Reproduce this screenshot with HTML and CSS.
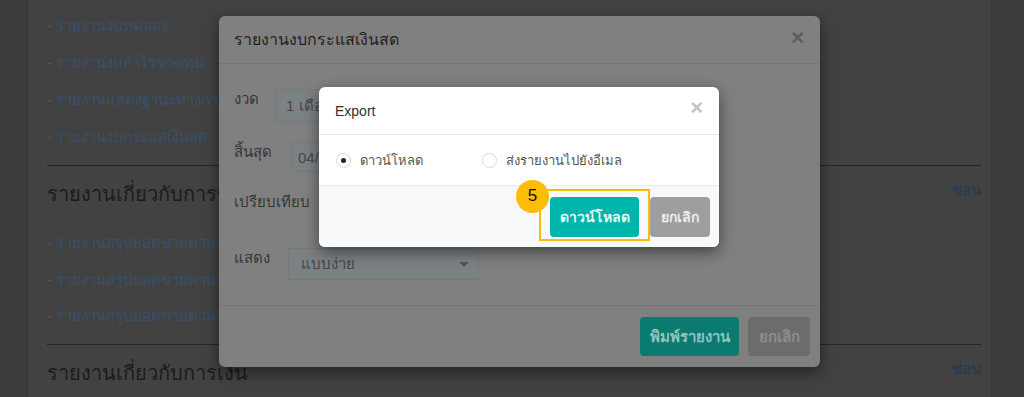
FILE: index.html
```html
<!DOCTYPE html>
<html lang="th">
<head>
<meta charset="utf-8">
<title>Export</title>
<link rel="stylesheet" href="styles.css">
</head>
<body>
<div class="page">
  <aside class="side side-left"></aside>
  <main class="content">
    <ul class="report-list">
      <li><span class="dash">-</span> <a class="report-link">รายงานงบทดลอง</a></li>
      <li><span class="dash">-</span> <a class="report-link">รายงานงบกำไรขาดทุน</a></li>
      <li><span class="dash">-</span> <a class="report-link">รายงานแสดงฐานะทางการเงิน</a></li>
      <li><span class="dash">-</span> <a class="report-link">รายงานงบกระแสเงินสด</a></li>
    </ul>
    <hr class="divider">
    <div class="section-head">
      <h2 class="section-title">รายงานเกี่ยวกับการขาย</h2>
      <a class="toggle">ซ่อน</a>
    </div>
    <ul class="report-list report-list-2">
      <li><span class="dash">-</span> <a class="report-link">รายงานสรุปยอดขายตามลูกค้า</a></li>
      <li><span class="dash">-</span> <a class="report-link">รายงานสรุปยอดขายตามบัญชี</a></li>
      <li><span class="dash">-</span> <a class="report-link">รายงานสรุปยอดขายตามลูกหนี้</a></li>
    </ul>
    <hr class="divider">
    <div class="section-head">
      <h2 class="section-title">รายงานเกี่ยวกับการเงิน</h2>
      <a class="toggle">ซ่อน</a>
    </div>
  </main>
  <aside class="side side-right"></aside>
</div>

<div class="modal modal-report">
  <div class="modal-header report-header">
    <h3 class="report-title">รายงานงบกระแสเงินสด</h3>
    <span class="close close-dim">&times;</span>
  </div>
  <div class="report-body">
    <div class="form-row row-period">
      <label class="form-label">งวด</label>
      <div class="control control-period">1 เดือน</div>
    </div>
    <div class="form-row row-end">
      <label class="form-label">สิ้นสุด</label>
      <div class="control control-end">04/2563</div>
    </div>
    <div class="form-row row-compare">
      <label class="form-label">เปรียบเทียบ</label>
    </div>
    <div class="form-row row-show">
      <label class="form-label">แสดง</label>
      <div class="control control-show">แบบง่าย<span class="caret"></span></div>
    </div>
  </div>
  <div class="report-footer">
    <button class="btn btn-print">พิมพ์รายงาน</button>
    <button class="btn btn-cancel-dim">ยกเลิก</button>
  </div>
</div>

<div class="modal modal-export">
  <div class="modal-header export-header">
    <h3 class="export-title">Export</h3>
    <span class="close close-light">&times;</span>
  </div>
  <div class="export-body">
    <label class="radio"><span class="radio-dot checked"></span>ดาวน์โหลด</label>
    <label class="radio radio-email"><span class="radio-dot"></span>ส่งรายงานไปยังอีเมล</label>
  </div>
  <div class="export-footer">
    <div class="highlight-wrap">
      <button class="btn btn-download">ดาวน์โหลด</button>
      <span class="highlight"></span>
      <span class="step-badge">5</span>
    </div>
    <button class="btn btn-cancel">ยกเลิก</button>
  </div>
</div>
</body>
</html>
```

FILE: styles.css
```css
* { box-sizing: border-box; }

html, body {
  margin: 0;
  padding: 0;
  width: 1024px;
  height: 397px;
  overflow: hidden;
}

body {
  background: #3d3d3d;
  font-family: "Liberation Sans", "Noto Sans", "DejaVu Sans", sans-serif;
  font-size: 14px;
  color: #333;
  position: relative;
}

.page {
  display: flex;
  height: 397px;
}

.side { background: #3d3d3d; }
.side-left { width: 28px; border-right: 1px solid #383838; }
.side-right { width: 33px; border-left: 1px solid #383838; }

.content {
  flex: 1;
  background: #424242;
  padding: 16px 10px 0 19px;
}

.report-list {
  list-style: none;
  margin: 0;
  padding: 0;
  display: flex;
  flex-direction: column;
  gap: 17px;
}
.report-list-2 { margin-top: 25px; gap: 16.5px; }

.report-list li {
  font-size: 15px;
  line-height: 20px;
  white-space: nowrap;
}

.dash { color: #555; }
.report-link { color: #38506b; }

.divider {
  border: 0;
  border-top: 1px solid #262626;
  margin: 18px 0 14px;
  height: 0;
}

.section-head {
  display: flex;
  justify-content: space-between;
  align-items: flex-start;
  height: 28px;
}
.section-title {
  margin: 0;
  font-size: 20px;
  line-height: 28px;
  font-weight: normal;
  color: #1c1c1c;
  white-space: nowrap;
}
.toggle {
  color: #2b3c4f;
  font-size: 15px;
  line-height: 20px;
  font-weight: bold;
}

/* Modals */
.modal {
  position: absolute;
  border-radius: 6px;
  overflow: hidden;
  box-shadow: 0 5px 15px rgba(0, 0, 0, 0.5);
  display: flex;
  flex-direction: column;
}

.modal-header {
  display: flex;
  align-items: center;
  justify-content: space-between;
}

.close {
  font-size: 22px;
  font-weight: bold;
  line-height: 20px;
}

/* Report modal (dimmed under backdrop) */
.modal-report {
  left: 219px;
  top: 16px;
  width: 601px;
  height: 351px;
  background: #808080;
}
.report-header {
  height: 48px;
  padding: 0 16px 0 15px;
  border-bottom: 1px solid #777;
}
.report-title {
  margin: 0;
  font-size: 16px;
  font-weight: normal;
  color: #1f1f1f;
}
.close-dim { color: #5e5e5e; margin-top: -4px; }

.report-body {
  flex: 1;
  padding: 25px 15px 0 15px;
  display: flex;
  flex-direction: column;
  gap: 20px;
}
.form-row {
  display: flex;
  align-items: flex-start;
  gap: 16px;
}
.row-end { gap: 19px; }
.row-show { gap: 18px; }
.form-label {
  line-height: 20px;
  font-size: 15px;
  color: #363636;
}
.control {
  background: #7c8184;
  border: 1px solid #75797c;
  border-radius: 3px;
  color: #474747;
  font-size: 15px;
  display: flex;
  align-items: center;
  position: relative;
}
.control-period { height: 33px; width: 180px; padding-left: 10px; }
.control-end { height: 30px; width: 150px; padding-left: 6px; }
.row-compare { height: 36px; }
.control-show { height: 32px; width: 191px; padding-left: 12px; }
.caret {
  position: absolute;
  right: 9px;
  top: 13px;
  width: 0;
  height: 0;
  border-left: 5px solid transparent;
  border-right: 5px solid transparent;
  border-top: 5px solid #555;
}

.report-footer {
  height: 62px;
  border-top: 1px solid #777;
  display: flex;
  justify-content: flex-end;
  align-items: center;
  gap: 9px;
  padding: 0 10px;
}

.btn {
  border: 0;
  border-radius: 4px;
  font-family: inherit;
  font-size: 15px;
  height: 39px;
  padding: 0;
  white-space: nowrap;
}
.btn-print { background: #0b7a6f; color: #8fc4bd; width: 99px; font-weight: bold; }
.btn-cancel-dim { background: #6c6c6c; color: #8c8c8c; width: 62px; font-weight: bold; }

/* Export modal */
.modal-export {
  left: 319px;
  top: 87px;
  width: 400px;
  height: 160px;
  background: #fff;
  overflow: visible;
}
.export-header {
  height: 48px;
  padding: 0 16px;
  border-bottom: 1px solid #e5e5e5;
}
.export-title {
  margin: 0;
  font-size: 14px;
  font-weight: normal;
  color: #333;
}
.close-light { color: #c4c4c4; margin-top: -6px; }

.export-body {
  height: 51px;
  display: flex;
  align-items: center;
  padding-left: 17px;
  border-bottom: 1px solid #ececec;
}
.radio {
  display: flex;
  align-items: center;
  gap: 9px;
  color: #555;
  font-size: 13px;
}
.radio-email { margin-left: 59px; }
.radio-dot {
  width: 15px;
  height: 15px;
  border-radius: 50%;
  border: 1px solid #d9d9d9;
  background: #fff;
  position: relative;
}
.radio-dot.checked::after {
  content: "";
  position: absolute;
  left: 4px;
  top: 4px;
  width: 5px;
  height: 5px;
  border-radius: 50%;
  background: #222;
}

.export-footer {
  flex: 1;
  background: #f8f9fa;
  border-radius: 0 0 6px 6px;
  display: flex;
  justify-content: flex-end;
  align-items: center;
  gap: 11px;
  padding: 0 9px 0 0;
}
.highlight-wrap { position: relative; display: flex; }
.btn-download {
  background: #00b5ac;
  color: #e8f7f6;
  width: 89px;
  height: 40px;
  font-size: 14px;
  font-weight: bold;
}
.btn-cancel {
  background: #9e9e9e;
  color: #ececec;
  width: 60px;
  height: 40px;
  font-size: 14px;
  font-weight: bold;
}
.highlight {
  position: absolute;
  left: -11px;
  right: -11px;
  top: -8px;
  bottom: -4px;
  border: 2px solid #fbbd08;
}
.step-badge {
  position: absolute;
  left: -34px;
  top: -17px;
  width: 33px;
  height: 33px;
  border-radius: 50%;
  background: #fbbd08;
  color: #111;
  font-size: 17px;
  display: flex;
  align-items: center;
  justify-content: center;
}
```
